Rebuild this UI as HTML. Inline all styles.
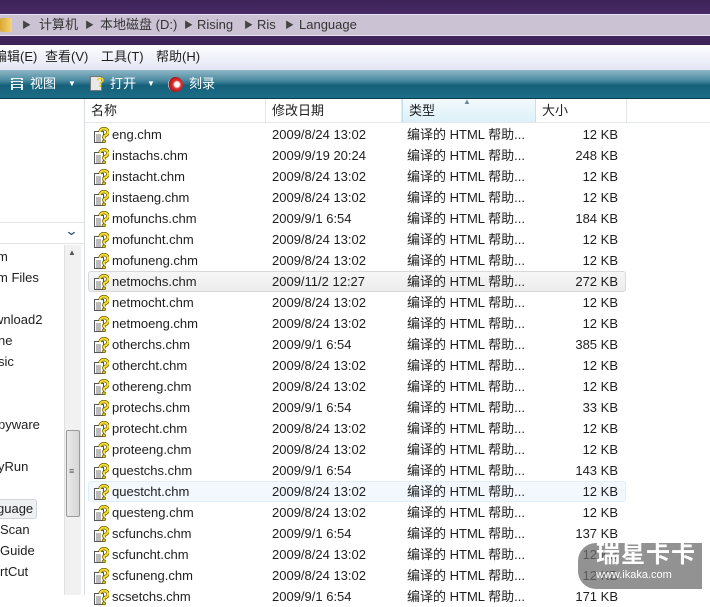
<!DOCTYPE html>
<html><head><meta charset="utf-8"><style>
*{margin:0;padding:0;box-sizing:border-box}
body{width:710px;height:595px;overflow:hidden;background:#fff;font-family:"Liberation Sans","Noto Sans CJK SC",sans-serif;font-size:13px;color:#1e1e1e;position:relative}
.abs{position:absolute}
#title{left:0;top:0;width:710px;height:45px;background:linear-gradient(#3d2358,#4a2c6a 40%,#3a2156)}
#addr{left:0;top:14px;width:710px;height:22px;background:#cbc3d4;border-top:1px solid #e8e0ee;border-bottom:1px solid #e8e0ee;color:#333;line-height:20px;white-space:nowrap}
#menu{left:0;top:45px;width:710px;height:25px;background:linear-gradient(#fdfdff,#e4e6f4);line-height:24px;white-space:nowrap}
#tool{left:0;top:70px;width:710px;height:29px;background:linear-gradient(#8fb6c4,#4f8ea4 35%,#16607a 55%,#1b6d87);color:#fff;line-height:28px;white-space:nowrap;border-bottom:1px solid #0e3c4c}
#hdr{left:85px;top:99px;width:625px;height:24px;background:#fff;border-bottom:1px solid #e4e8ee}
.hc{position:absolute;top:0;height:23px;line-height:23px;padding-left:6px;border-right:1px solid #e3e6ea}
.row{position:absolute;left:88px;width:538px;height:21px;line-height:21px;white-space:nowrap}
.row span{position:absolute;top:0}
.ic{left:5px;top:3px;width:16px;height:16px}
.n{left:24px}.d{left:184px}.t{left:319px}.s{left:450px;width:80px;text-align:right}
.tree{position:absolute;left:0;height:21px;line-height:21px;white-space:nowrap}
</style></head><body>
<div id="title" class="abs"></div>
<div id="addr" class="abs">
<div class="abs" style="left:0;top:3px;width:12px;height:14px;background:linear-gradient(90deg,#d9a830,#f5d57a);border-radius:2px"></div>
<span class="abs" style="left:22px;font-size:9px;color:#444">▶</span>
<span class="abs" style="left:39px">计算机</span>
<span class="abs" style="left:85px;font-size:9px;color:#444">▶</span>
<span class="abs" style="left:100px">本地磁盘 (D:)</span>
<span class="abs" style="left:184px;font-size:9px;color:#444">▶</span>
<span class="abs" style="left:197px">Rising</span>
<span class="abs" style="left:244px;font-size:9px;color:#444">▶</span>
<span class="abs" style="left:257px">Ris</span>
<span class="abs" style="left:285px;font-size:9px;color:#444">▶</span>
<span class="abs" style="left:299px">Language</span>
</div>
<div id="menu" class="abs">
<span class="abs" style="left:-6px">编辑(E)</span>
<span class="abs" style="left:45px">查看(V)</span>
<span class="abs" style="left:101px">工具(T)</span>
<span class="abs" style="left:156px">帮助(H)</span>
</div>
<div id="tool" class="abs">
<span class="abs" style="left:11px;top:8px;width:12px;height:12px;border-left:2px dotted #fff;border-right:2px dotted #fff;background:repeating-linear-gradient(#fff 0 1px,transparent 1px 3px);opacity:.9"></span>
<span class="abs" style="left:30px">视图</span>
<span class="abs" style="left:68px;font-size:8px">▼</span>
<span class="abs" style="left:90px;top:6px;width:12px;height:15px;background:#e8e8e8;border:1px solid #777"></span>
<span class="abs" style="left:96px;top:-2px;color:#f0d020;font-weight:bold;font-size:14px">?</span>
<span class="abs" style="left:110px">打开</span>
<span class="abs" style="left:147px;font-size:8px">▼</span>
<span class="abs" style="left:168px;top:7px;width:15px;height:15px;border-radius:50%;background:radial-gradient(circle at 60% 50%,#fff 20%,#d33 35%,#a11 70%,#ddd 72%)"></span>
<span class="abs" style="left:189px">刻录</span>
</div>
<div class="abs" style="left:0;top:99px;width:85px;height:496px;background:#fff;border-right:1px solid #d8dde4"></div>
<div class="abs" style="left:0;top:222px;width:84px;height:22px;border-top:1px solid #e4e4e4;border-bottom:1px solid #e4e4e4"></div>
<span class="abs" style="left:66px;top:223px;color:#1d4f7a;font-size:13px;transform:scaleX(1.3)">⌄</span>
<div class="abs" style="left:64px;top:245px;width:17px;height:350px;background:#f1f1f1;border-left:1px solid #e0e0e0"></div>
<span class="abs" style="left:68px;top:248px;font-size:8px;color:#555">▲</span>
<div class="abs" style="left:66px;top:430px;width:14px;height:87px;background:linear-gradient(90deg,#e9e9e9,#d6d6d6);border:1px solid #9a9a9a;border-radius:2px"></div>
<span class="abs" style="left:69px;top:466px;font-size:9px;color:#555">≡</span>
<div class="tree" style="top:246px;left:-3px">m</div>
<div class="tree" style="top:267px;left:-3px">m Files</div>
<div class="tree" style="top:309px;left:-6px">wnload2</div>
<div class="tree" style="top:330px;left:-2px">ne</div>
<div class="tree" style="top:351px;left:-2px">sic</div>
<div class="tree" style="top:414px;left:-2px">pyware</div>
<div class="tree" style="top:456px;left:-2px">yRun</div>
<div class="abs" style="left:0;top:499px;width:37px;height:20px;background:#eef0f2;border:1px solid #d0d4d8;border-left:none;border-radius:0 3px 3px 0"></div>
<div class="tree" style="top:498px;left:-3px">guage</div>
<div class="tree" style="top:519px;left:0">Scan</div>
<div class="tree" style="top:540px;left:0">Guide</div>
<div class="tree" style="top:561px;left:0">rtCut</div>
<div id="hdr" class="abs">
<div class="hc" style="left:0;width:181px">名称</div>
<div class="hc" style="left:181px;width:136px">修改日期</div>
<div class="hc" style="left:317px;width:134px;background:linear-gradient(#f4fafd,#ddf0f9);border-left:1px solid #c4e0ee;border-right:1px solid #c4e0ee">类型<span style="position:absolute;left:60px;top:-9px;font-size:8px;color:#6a8aa0">▲</span></div>
<div class="hc" style="left:451px;width:91px">大小</div>
</div>
<div class="abs" style="left:88px;top:271px;width:538px;height:21px;background:linear-gradient(#f7f7f7,#ececec);border:1px solid #d9d9d9;border-radius:3px"></div>
<div class="abs" style="left:88px;top:481px;width:538px;height:21px;background:#f2f8fd;border:1px solid #e0eef8;border-radius:3px"></div>
<div id="rows"></div>
<div class="abs" style="left:578px;top:543px;width:124px;height:46px;background:rgba(110,110,110,.75);border-radius:18px 0 0 18px"></div>
<div class="abs" style="left:596px;top:541px;color:#fff;font-size:24px;font-weight:bold;letter-spacing:1px;line-height:28px">瑞星卡卡</div>
<div class="abs" style="left:596px;top:568px;color:#fff;font-size:11px;line-height:14px">www.ikaka.com</div>
<script>
var d=[["eng","2009/8/24 13:02","12"],["instachs","2009/9/19 20:24","248"],["instacht","2009/8/24 13:02","12"],["instaeng","2009/8/24 13:02","12"],["mofunchs","2009/9/1 6:54","184"],["mofuncht","2009/8/24 13:02","12"],["mofuneng","2009/8/24 13:02","12"],["netmochs","2009/11/2 12:27","272"],["netmocht","2009/8/24 13:02","12"],["netmoeng","2009/8/24 13:02","12"],["otherchs","2009/9/1 6:54","385"],["othercht","2009/8/24 13:02","12"],["othereng","2009/8/24 13:02","12"],["protechs","2009/9/1 6:54","33"],["protecht","2009/8/24 13:02","12"],["proteeng","2009/8/24 13:02","12"],["questchs","2009/9/1 6:54","143"],["questcht","2009/8/24 13:02","12"],["questeng","2009/8/24 13:02","12"],["scfunchs","2009/9/1 6:54","137"],["scfuncht","2009/8/24 13:02","12"],["scfuneng","2009/8/24 13:02","12"],["scsetchs","2009/9/1 6:54","171"]];
var ic='<svg class="ic" style="position:absolute" viewBox="0 0 16 16"><rect x="1.5" y="4.5" width="9" height="11" fill="#fff" stroke="#555"/><path d="M3 8h5M3 10h5M3 12h5M3 14h5" stroke="#777"/><path d="M7 5a4 3.5 0 1 1 5 3.5l-1 1v2" fill="none" stroke="#6b5a00" stroke-width="3.5"/><path d="M7 5a4 3.5 0 1 1 5 3.5l-1 1v2" fill="none" stroke="#f4e030" stroke-width="2"/><circle cx="11" cy="14.3" r="1.5" fill="#e8d020" stroke="#6b5a00" stroke-width=".8"/></svg>';
var h='';d.forEach(function(r,i){h+='<div class="row" style="top:'+(124+21*i)+'px">'+ic+'<span class="n">'+r[0]+'.chm</span><span class="d">'+r[1]+'</span><span class="t">编译的 HTML 帮助...</span><span class="s">'+r[2]+' KB</span></div>'});
document.getElementById('rows').outerHTML=h;
</script>
</body></html>
